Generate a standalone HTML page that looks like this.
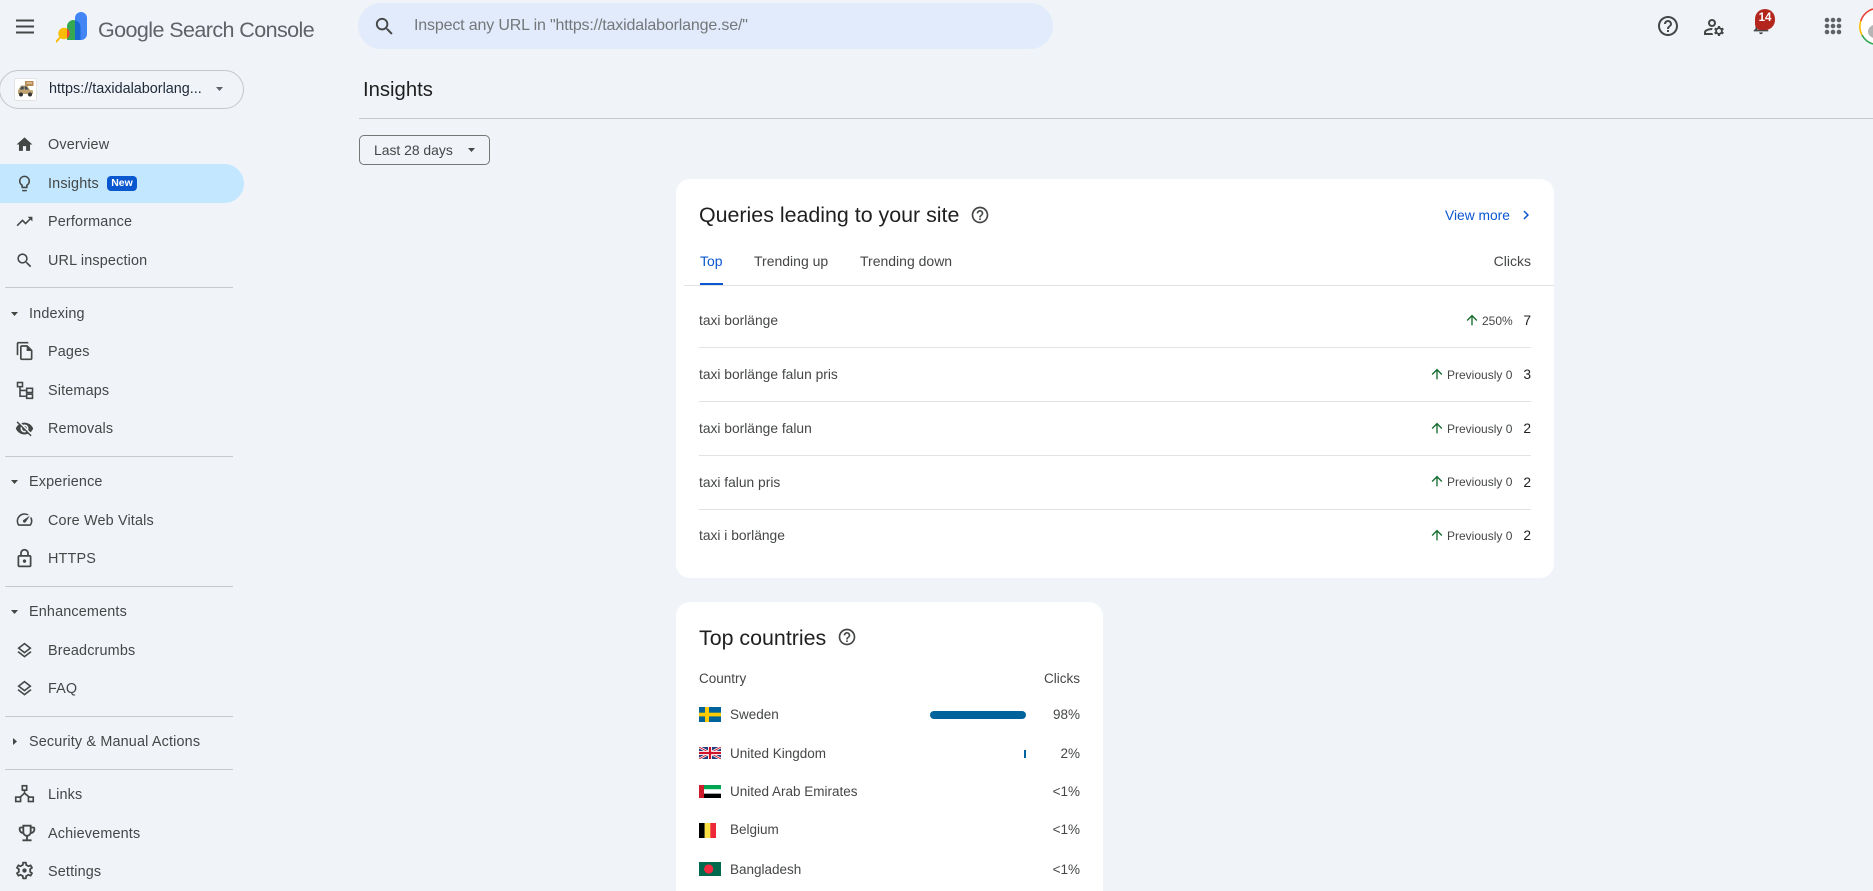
<!DOCTYPE html>
<html><head><meta charset="utf-8"><title>Insights</title>
<style>
html,body{margin:0;padding:0;width:1873px;height:891px;overflow:hidden;background:#f0f4f9;font-family:"Liberation Sans",Arial,sans-serif;color:#444746}
#w{position:absolute;left:0;top:0;width:1873px;height:891px;overflow:hidden;background:#f0f4f9;filter:blur(.3px)}
.t{position:absolute;white-space:nowrap;line-height:20px;height:20px}
.n{left:48px;font-size:14.4px;letter-spacing:.16px;color:#444746;margin-top:1px}
.h{left:29px;font-size:14.4px;letter-spacing:.16px;color:#444746;margin-top:1px}
.q{left:699px;font-size:13.8px;color:#444746;margin-top:1px}
.v{right:342px;font-size:13.8px;color:#1f1f1f;margin-top:1px}
.p{left:1447px;font-size:12px;color:#444746;margin-top:1px}
.c{left:730px;font-size:13.5px;color:#444746}
.r{right:793px;font-size:13.5px;color:#444746}
.d{position:absolute;height:1px;background:#c7c9cc}
.l{position:absolute;height:1px;background:#e0e2e5}
svg{position:absolute;display:block}
.i{width:19px;height:19px;left:15px;fill:#444746}
.a{width:16px;height:16px;fill:#146c2e}
.box{position:absolute;background:#fff;border-radius:14px}
</style></head><body><div id="w">

<!-- top bar -->
<svg style="left:13px;top:14px;width:24px;height:24px" viewBox="0 0 24 24" fill="#444746"><path d="M3 5.500h18v2H3zM3 11.500h18v2H3zM3 17.500h18v2H3z"/></svg>
<svg style="left:56px;top:11px;width:32px;height:32px" viewBox="56 11 32 32">
<rect x="75" y="12" width="12" height="28" rx="6" fill="#4285f4"/><path d="M75 40V20.500c4 .5 5.500 4 5.500 7V40z" fill="#1967d2"/>
<path d="M67 40V26.500a6.500 6.500 0 0 1 8-6.300V40z" fill="#34a853"/><circle cx="64" cy="33.500" r="5.700" fill="#fbbc04"/><path d="M67 28.650A5.700 5.700 0 0 1 67 38.350z" fill="#ea4335"/><path d="M60 37.500l-3.500 4" stroke="#fbbc04" stroke-width="2" stroke-linecap="round"/></svg>
<div class="t" style="left:98px;top:19px;font-size:21.500px;letter-spacing:-.58px;color:#5f6368;line-height:22px;height:22px">Google Search Console</div>

<div style="position:absolute;left:358px;top:3px;width:695px;height:46px;border-radius:23px;background:#e1ebfb"></div>
<svg style="left:373px;top:15px;width:23px;height:23px;fill:#444746" viewBox="0 0 24 24"><path d="M15.500 14h-.79l-.28-.27C15.410 12.590 16 11.110 16 9.500 16 5.910 13.090 3 9.500 3S3 5.910 3 9.500 5.910 16 9.500 16c1.610 0 3.090-.59 4.230-1.570l.27.28v.79l5 4.990L20.490 19l-4.990-5zm-6 0C7.010 14 5 11.990 5 9.500S7.010 5 9.500 5 14 7.010 14 9.500 11.990 14 9.500 14z"/></svg>
<div class="t" style="left:414px;top:16px;font-size:16px;letter-spacing:-.16px;color:#74777a">Inspect any URL in "https://taxidalaborlange.se/"</div>

<svg style="left:1656px;top:14px;width:24px;height:24px;fill:#444746" viewBox="0 0 24 24"><path d="M11 18h2v-2h-2v2zm1-16C6.480 2 2 6.480 2 12s4.480 10 10 10 10-4.480 10-10S17.520 2 12 2zm0 18c-4.410 0-8-3.590-8-8s3.590-8 8-8 8 3.590 8 8-3.590 8-8 8zm0-14c-2.210 0-4 1.790-4 4h2c0-1.100.9-2 2-2s2 .9 2 2c0 2-3 1.750-3 5h2c0-2.250 3-2.500 3-5 0-2.210-1.790-4-4-4z"/></svg>
<svg style="left:1702px;top:15px;width:24px;height:24px;fill:#444746" viewBox="0 0 24 24"><path d="M10 4C7.790 4 6 5.790 6 8s1.790 4 4 4 4-1.790 4-4-1.790-4-4-4zm0 6c-1.100 0-2-.9-2-2s.9-2 2-2 2 .9 2 2-.9 2-2 2z"/><path d="M4 18v-.65c0-.34.16-.66.41-.81C6.100 15.530 8.030 15 10 15c.03 0 .05 0 .08.01.1-.7.3-1.370.59-1.980-.22-.02-.44-.03-.67-.03-2.420 0-4.680.67-6.610 1.820C2.510 15.340 2 16.320 2 17.350V20h9.260c-.42-.6-.75-1.280-.97-2H4z"/><path d="M20.750 16c0-.22-.03-.42-.06-.63l1.140-1.010-1-1.730-1.450.49c-.32-.27-.68-.48-1.080-.63L18 11h-2l-.3 1.490c-.4.15-.76.36-1.080.63l-1.450-.49-1 1.730 1.140 1.010c-.03.21-.06.41-.06.63s.03.42.06.63l-1.140 1.010 1 1.730 1.450-.49c.32.27.68.48 1.080.63L16 21h2l.3-1.490c.4-.15.76-.36 1.080-.63l1.450.49 1-1.730-1.140-1.010c.03-.21.06-.41.06-.63zM17 18c-1.100 0-2-.9-2-2s.9-2 2-2 2 .9 2 2-.9 2-2 2z"/></svg>
<svg style="left:1750px;top:14px;width:22px;height:22px;fill:#444746" viewBox="0 0 24 24"><path d="M12 22c1.100 0 2-.9 2-2h-4c0 1.100.9 2 2 2zm6-6v-5c0-3.070-1.640-5.640-4.500-6.320V4c0-.83-.67-1.500-1.500-1.500s-1.500.67-1.500 1.500v.68C7.630 5.360 6 7.920 6 11v5l-2 2v1h16v-1l-2-2zm-2 1H8v-6c0-2.480 1.510-4.500 4-4.500s4 2.020 4 4.500v6z"/></svg>
<div style="position:absolute;left:1755px;top:9px;width:20px;height:21px;border-radius:10px 10px 10px 6px;background:#b3261e;color:#fff;font-size:11.500px;font-weight:bold;line-height:19px;text-align:center">14</div>
<svg style="left:1824px;top:17px;width:18px;height:18px;fill:#5f6368" viewBox="0 0 18 18"><circle cx="3" cy="3" r="2.300"/><circle cx="9" cy="3" r="2.300"/><circle cx="15" cy="3" r="2.300"/><circle cx="3" cy="9" r="2.300"/><circle cx="9" cy="9" r="2.300"/><circle cx="15" cy="9" r="2.300"/><circle cx="3" cy="15" r="2.300"/><circle cx="9" cy="15" r="2.300"/><circle cx="15" cy="15" r="2.300"/></svg>
<svg style="left:1858px;top:7px;width:15px;height:39px" viewBox="0 0 15 39"><circle cx="20" cy="19.500" r="18.200" fill="#fff" stroke="none"/><path d="M2.800 14A18.200 18.200 0 0 1 15 2" fill="none" stroke="#ea4335" stroke-width="1.600"/><path d="M2.800 14A18.200 18.200 0 0 0 4 28" fill="none" stroke="#fbbc04" stroke-width="1.600"/><path d="M4 28A18.200 18.200 0 0 0 15 37" fill="none" stroke="#34a853" stroke-width="1.600"/><ellipse cx="20" cy="24.500" rx="10" ry="7.500" fill="#b5b5b5"/></svg>

<!-- property selector -->
<div style="position:absolute;left:-1px;top:70px;width:243px;height:37px;border:1px solid #c4c7c9;border-radius:20px"></div>
<div style="position:absolute;left:14px;top:78px;width:21px;height:21px;border:1px solid #e3e3e3;background:#fff;border-radius:2px"></div>
<svg style="left:17px;top:81px;width:17px;height:17px" viewBox="0 0 17 17"><rect x="8" y="0" width="8.500" height="5" fill="#b58a55"/><rect x="9.500" y="1.500" width="5.500" height="1" fill="#f1e2c4"/><path d="M1 13V9.500l3-5h6l3 4.500 3 .5V13z" fill="#bfa272"/><path d="M4.500 5.500h2.200v3H2.800zM7.500 5.500h2l2 3h-3.500z" fill="#3c4a5a"/><circle cx="4" cy="13.500" r="2" fill="#333"/><circle cx="13" cy="13.500" r="2" fill="#333"/></svg>
<div class="t" style="left:49px;top:79px;font-size:14.400px;color:#1f2937">https://taxidalaborlang...</div>
<svg style="left:216px;top:87px;width:7px;height:4px;fill:#5f6368" viewBox="0 0 7 4"><path d="M0 0h7L3.500 4z"/></svg>

<!-- nav -->
<svg class="i" style="top:135px" viewBox="0 0 24 24"><path d="M10 20v-6h4v6h5v-8h3L12 3 2 12h3v8z"/></svg>
<div class="t n" style="top:134px">Overview</div>
<div style="position:absolute;left:-20px;top:164px;width:264px;height:39px;border-radius:0 20px 20px 0;background:#c2e7ff"></div>
<svg class="i" style="top:174px" viewBox="0 0 24 24"><path d="M9 21c0 .55.45 1 1 1h4c.55 0 1-.45 1-1v-1H9v1zm3-19C8.140 2 5 5.140 5 9c0 2.380 1.190 4.470 3 5.740V17c0 .55.45 1 1 1h6c.55 0 1-.45 1-1v-2.260c1.810-1.270 3-3.360 3-5.740 0-3.860-3.140-7-7-7zm2.850 11.100l-.85.6V16h-4v-2.300l-.85-.6C7.800 12.160 7 10.630 7 9c0-2.760 2.240-5 5-5s5 2.240 5 5c0 1.630-.8 3.160-2.150 4.100z"/></svg>
<div class="t n" style="top:173px">Insights</div>
<div style="position:absolute;left:107px;top:176px;width:30px;height:15px;border-radius:4px;background:#0b57d0;color:#fff;font-size:10.500px;font-weight:bold;line-height:15px;text-align:center">New</div>
<svg class="i" style="top:212px" viewBox="0 0 24 24"><path d="M16 6l2.290 2.290-4.880 4.880-4-4L2 16.590 3.410 18l6-6 4 4 6.300-6.290L22 12V6z"/></svg>
<div class="t n" style="top:211px">Performance</div>
<svg class="i" style="top:251px" viewBox="0 0 24 24"><path d="M15.500 14h-.79l-.28-.27C15.410 12.590 16 11.110 16 9.500 16 5.910 13.090 3 9.500 3S3 5.910 3 9.500 5.910 16 9.500 16c1.610 0 3.090-.59 4.230-1.570l.27.28v.79l5 4.990L20.490 19l-4.990-5zm-6 0C7.010 14 5 11.990 5 9.500S7.010 5 9.500 5 14 7.010 14 9.500 11.990 14 9.500 14z"/></svg>
<div class="t n" style="top:250px">URL inspection</div>
<div class="d" style="left:5px;top:287px;width:228px"></div>

<svg style="left:11px;top:312px;width:7px;height:4px;fill:#444746" viewBox="0 0 7 4"><path d="M0 0h7L3.500 4z"/></svg>
<div class="t h" style="top:303px">Indexing</div>
<svg class="i" style="top:341px;width:20px;height:20px" viewBox="0 0 24 24"><path d="M16 1H4c-1.100 0-2 .9-2 2v14h2V3h12V1zm-1 4H8c-1.100 0-1.990.9-1.990 2L6 21c0 1.100.89 2 1.990 2H19c1.100 0 2-.9 2-2V11l-6-6zM8 21V7h6v5h5v9H8z"/></svg>
<div class="t n" style="top:341px">Pages</div>
<svg class="i" style="top:380px;width:20px;height:20px;fill:none;stroke:#444746;stroke-width:1.900" viewBox="0 0 24 24"><rect x="3" y="3" width="6" height="5"/><rect x="14" y="10" width="7" height="5"/><rect x="14" y="17" width="7" height="5"/><path d="M6 8v11.500h8M6 12.500h8"/></svg>
<div class="t n" style="top:380px">Sitemaps</div>
<svg class="i" style="top:419px" viewBox="0 0 24 24"><path d="M12 7c2.760 0 5 2.240 5 5 0 .65-.13 1.260-.36 1.830l2.920 2.920c1.510-1.260 2.700-2.890 3.430-4.750-1.730-4.390-6-7.500-11-7.500-1.400 0-2.740.25-3.980.7l2.160 2.160C10.740 7.130 11.350 7 12 7zM2 4.270l2.280 2.280.46.46C3.080 8.300 1.780 10.020 1 12c1.730 4.390 6 7.500 11 7.500 1.550 0 3.030-.3 4.380-.84l.42.42L19.730 22 21 20.730 3.270 3 2 4.270zM7.530 9.800l1.550 1.550c-.05.21-.08.43-.08.65 0 1.660 1.340 3 3 3 .22 0 .44-.03.65-.08l1.550 1.550c-.67.33-1.410.53-2.200.53-2.760 0-5-2.240-5-5 0-.79.2-1.530.53-2.200zm4.310-.78l3.150 3.150.02-.16c0-1.660-1.340-3-3-3l-.17.01z"/></svg>
<div class="t n" style="top:418px">Removals</div>
<div class="d" style="left:5px;top:456px;width:228px"></div>

<svg style="left:11px;top:480px;width:7px;height:4px;fill:#444746" viewBox="0 0 7 4"><path d="M0 0h7L3.500 4z"/></svg>
<div class="t h" style="top:471px">Experience</div>
<svg class="i" style="top:510px" viewBox="0 0 24 24"><path d="M20.380 8.570l-1.230 1.850a8 8 0 0 1-.22 7.580H5.070A8 8 0 0 1 15.580 6.850l1.850-1.230A10 10 0 0 0 3.350 19a2 2 0 0 0 1.720 1h13.850a2 2 0 0 0 1.740-1 10 10 0 0 0-.27-10.440zm-9.790 6.840a2 2 0 0 0 2.830 0l5.660-8.490-8.490 5.660a2 2 0 0 0 0 2.830z"/></svg>
<div class="t n" style="top:510px">Core Web Vitals</div>
<svg class="i" style="top:548px;left:14px;width:21px;height:21px" viewBox="0 0 24 24"><path d="M18 8h-1V6c0-2.760-2.240-5-5-5S7 3.240 7 6v2H6c-1.100 0-2 .9-2 2v10c0 1.100.9 2 2 2h12c1.100 0 2-.9 2-2V10c0-1.100-.9-2-2-2zM9 6c0-1.660 1.340-3 3-3s3 1.340 3 3v2H9V6zm9 14H6V10h12v10zm-6-3c1.100 0 2-.9 2-2s-.9-2-2-2-2 .9-2 2 .9 2 2 2z"/></svg>
<div class="t n" style="top:548px">HTTPS</div>
<div class="d" style="left:5px;top:586px;width:228px"></div>

<svg style="left:11px;top:610px;width:7px;height:4px;fill:#444746" viewBox="0 0 7 4"><path d="M0 0h7L3.500 4z"/></svg>
<div class="t h" style="top:601px">Enhancements</div>
<svg class="i" style="top:641px" viewBox="0 0 24 24"><path d="M11.990 18.540l-7.370-5.730L3 14.070l9 7 9-7-1.630-1.270-7.380 5.740zM12 16l7.360-5.730L21 9l-9-7-9 7 1.630 1.270L12 16zm0-11.470L17.740 9 12 13.470 6.260 9 12 4.530z"/></svg>
<div class="t n" style="top:640px">Breadcrumbs</div>
<svg class="i" style="top:679px" viewBox="0 0 24 24"><path d="M11.990 18.540l-7.370-5.730L3 14.070l9 7 9-7-1.630-1.270-7.380 5.740zM12 16l7.360-5.730L21 9l-9-7-9 7 1.630 1.270L12 16zm0-11.470L17.740 9 12 13.470 6.260 9 12 4.530z"/></svg>
<div class="t n" style="top:678px">FAQ</div>
<div class="d" style="left:5px;top:716px;width:228px"></div>

<svg style="left:13px;top:738px;width:4px;height:7px;fill:#444746" viewBox="0 0 4 7"><path d="M0 0l4 3.500L0 7z"/></svg>
<div class="t h" style="top:731px">Security &amp; Manual Actions</div>
<div class="d" style="left:5px;top:769px;width:228px"></div>

<svg class="i" style="top:784px;left:14px;width:21px;height:21px;fill:none;stroke:#444746;stroke-width:1.900" viewBox="0 0 24 24"><rect x="9.500" y="2" width="5" height="5"/><rect x="2" y="15" width="5.500" height="5"/><rect x="16.500" y="15" width="5.500" height="5"/><path d="M12 7v3.500M12 10.500L7 15M12 10.500l5.500 4.500"/></svg>
<div class="t n" style="top:784px">Links</div>
<svg class="i" style="top:822px;left:15.500px;width:22px;height:22px" viewBox="0 0 24 24"><path d="M19 5h-2V3H7v2H5c-1.100 0-2 .9-2 2v1c0 2.550 1.920 4.630 4.390 4.940.63 1.500 1.980 2.630 3.610 2.960V19H7v2h10v-2h-4v-3.100c1.630-.33 2.980-1.460 3.610-2.960C19.080 12.630 21 10.550 21 8V7c0-1.100-.9-2-2-2zM5 8V7h2v3.820C5.840 10.400 5 9.300 5 8zm7 6c-1.650 0-3-1.350-3-3V5h6v6c0 1.650-1.350 3-3 3zm7-6c0 1.300-.84 2.400-2 2.820V7h2v1z"/></svg>
<div class="t n" style="top:823px">Achievements</div>
<svg class="i" style="top:860px;left:14px;width:21px;height:21px" viewBox="0 0 24 24"><path d="M19.430 12.980c.04-.32.07-.64.07-.98 0-.34-.03-.66-.07-.98l2.110-1.650c.19-.15.24-.42.12-.64l-2-3.460c-.09-.16-.26-.25-.44-.25-.06 0-.12.01-.17.03l-2.490 1c-.52-.4-1.080-.73-1.690-.98l-.38-2.650C14.460 2.180 14.250 2 14 2h-4c-.25 0-.46.18-.49.42l-.38 2.650c-.61.25-1.170.59-1.690.98l-2.490-1c-.06-.02-.12-.03-.18-.03-.17 0-.34.09-.43.25l-2 3.460c-.13.22-.07.49.12.64l2.110 1.650c-.04.32-.07.65-.07.98 0 .33.03.66.07.98l-2.110 1.650c-.19.15-.24.42-.12.64l2 3.460c.09.16.26.25.44.25.06 0 .12-.01.17-.03l2.490-1c.52.4 1.080.73 1.690.98l.38 2.650c.03.24.24.42.49.42h4c.25 0 .46-.18.49-.42l.38-2.650c.61-.25 1.170-.59 1.690-.98l2.490 1c.06.02.12.03.18.03.17 0 .34-.09.43-.25l2-3.460c.12-.22.07-.49-.12-.64l-2.110-1.650zm-1.980-1.710c.04.31.05.52.05.73 0 .21-.02.43-.05.73l-.14 1.130.89.7 1.080.84-.7 1.210-1.270-.51-1.040-.42-.9.68c-.43.32-.84.56-1.250.73l-1.060.43-.16 1.130-.2 1.350h-1.400l-.19-1.350-.16-1.130-1.060-.43c-.43-.18-.83-.41-1.230-.71l-.91-.7-1.060.43-1.270.51-.7-1.210 1.080-.84.89-.7-.14-1.130c-.03-.31-.05-.54-.05-.74s.02-.43.05-.73l.14-1.130-.89-.7-1.080-.84.7-1.210 1.270.51 1.040.42.9-.68c.43-.32.84-.56 1.250-.73l1.060-.43.16-1.130.2-1.350h1.390l.19 1.350.16 1.130 1.060.43c.43.18.83.41 1.230.71l.91.7 1.060-.43 1.270-.51.7 1.210-1.070.85-.89.7.14 1.130zM12 9.500a2.500 2.500 0 1 0 0 5 2.500 2.500 0 0 0 0-5z"/></svg>
<div class="t n" style="top:861px">Settings</div>

<!-- page header -->
<div class="t" style="left:363px;top:78px;font-size:20.300px;line-height:24px;height:24px;color:#1f1f1f">Insights</div>
<div class="d" style="left:359px;top:118px;width:1514px"></div>
<div style="position:absolute;left:359px;top:135px;width:129px;height:28px;border:1px solid #747775;border-radius:5px"></div>
<div class="t" style="left:374px;top:140px;font-size:13.900px;color:#444746">Last 28 days</div>
<svg style="left:468px;top:148px;width:7px;height:4px;fill:#444746" viewBox="0 0 7 4"><path d="M0 0h7L3.500 4z"/></svg>

<!-- queries card -->
<div class="box" style="left:676px;top:179px;width:878px;height:399px"></div>
<div class="t" style="left:699px;top:202px;font-size:21.400px;line-height:26px;height:26px;color:#1f1f1f">Queries leading to your site</div>
<svg style="left:970px;top:205px;width:20px;height:20px;fill:#444746" viewBox="0 0 24 24"><path d="M11 18h2v-2h-2v2zm1-16C6.480 2 2 6.480 2 12s4.480 10 10 10 10-4.480 10-10S17.520 2 12 2zm0 18c-4.410 0-8-3.590-8-8s3.590-8 8-8 8 3.590 8 8-3.590 8-8 8zm0-14c-2.210 0-4 1.790-4 4h2c0-1.100.9-2 2-2s2 .9 2 2c0 2-3 1.750-3 5h2c0-2.250 3-2.500 3-5 0-2.210-1.790-4-4-4z"/></svg>
<div class="t" style="left:1445px;top:206px;font-size:13.800px;color:#0b57d0">View more</div>
<svg style="left:1517px;top:206px;width:18px;height:18px;fill:#0b57d0" viewBox="0 0 24 24"><path d="M10 6L8.590 7.410 13.170 12l-4.580 4.590L10 18l6-6z"/></svg>
<div class="t" style="left:700px;top:251px;font-size:14px;color:#0b57d0">Top</div>
<div style="position:absolute;left:700px;top:283px;width:23px;height:2px;background:#0b57d0"></div>
<div class="t" style="left:754px;top:251px;font-size:14px;color:#444746">Trending up</div>
<div class="t" style="left:860px;top:251px;font-size:14px;color:#444746">Trending down</div>
<div class="t" style="right:342px;top:251px;font-size:14px;color:#444746">Clicks</div>
<div class="l" style="left:684px;top:285px;width:870px"></div>

<div class="t q" style="top:310px">taxi borlänge</div>
<svg class="a" style="left:1464px;top:312px" viewBox="0 0 24 24"><path d="M4 12l1.410 1.410L11 7.830V20h2V7.830l5.580 5.590L20 12l-8-8-8 8z"/></svg>
<div class="t p" style="left:1482px;top:310px">250%</div>
<div class="t v" style="top:310px">7</div>
<div class="l" style="left:699px;top:347px;width:832px"></div>

<div class="t q" style="top:364px">taxi borlänge falun pris</div>
<svg class="a" style="left:1429px;top:366px" viewBox="0 0 24 24"><path d="M4 12l1.410 1.410L11 7.830V20h2V7.830l5.580 5.590L20 12l-8-8-8 8z"/></svg>
<div class="t p" style="top:364px">Previously 0</div>
<div class="t v" style="top:364px">3</div>
<div class="l" style="left:699px;top:401px;width:832px"></div>

<div class="t q" style="top:418px">taxi borlänge falun</div>
<svg class="a" style="left:1429px;top:420px" viewBox="0 0 24 24"><path d="M4 12l1.410 1.410L11 7.830V20h2V7.830l5.580 5.590L20 12l-8-8-8 8z"/></svg>
<div class="t p" style="top:418px">Previously 0</div>
<div class="t v" style="top:418px">2</div>
<div class="l" style="left:699px;top:455px;width:832px"></div>

<div class="t q" style="top:472px">taxi falun pris</div>
<svg class="a" style="left:1429px;top:473px" viewBox="0 0 24 24"><path d="M4 12l1.410 1.410L11 7.830V20h2V7.830l5.580 5.590L20 12l-8-8-8 8z"/></svg>
<div class="t p" style="top:471px">Previously 0</div>
<div class="t v" style="top:472px">2</div>
<div class="l" style="left:699px;top:509px;width:832px"></div>

<div class="t q" style="top:525px">taxi i borlänge</div>
<svg class="a" style="left:1429px;top:527px" viewBox="0 0 24 24"><path d="M4 12l1.410 1.410L11 7.830V20h2V7.830l5.580 5.590L20 12l-8-8-8 8z"/></svg>
<div class="t p" style="top:525px">Previously 0</div>
<div class="t v" style="top:525px">2</div>

<!-- countries card -->
<div class="box" style="left:676px;top:602px;width:427px;height:289px;border-radius:14px 14px 0 0"></div>
<div class="t" style="left:699px;top:625px;font-size:21.400px;line-height:26px;height:26px;color:#1f1f1f">Top countries</div>
<svg style="left:837px;top:627px;width:20px;height:20px;fill:#444746" viewBox="0 0 24 24"><path d="M11 18h2v-2h-2v2zm1-16C6.480 2 2 6.480 2 12s4.480 10 10 10 10-4.480 10-10S17.520 2 12 2zm0 18c-4.410 0-8-3.590-8-8s3.590-8 8-8 8 3.590 8 8-3.590 8-8 8zm0-14c-2.210 0-4 1.790-4 4h2c0-1.100.9-2 2-2s2 .9 2 2c0 2-3 1.750-3 5h2c0-2.250 3-2.500 3-5 0-2.210-1.790-4-4-4z"/></svg>
<div class="t c" style="left:699px;top:669px">Country</div>
<div class="t r" style="top:669px">Clicks</div>

<svg style="left:699px;top:707px;width:22px;height:15px" viewBox="0 0 22 15"><rect width="22" height="15" fill="#00639b"/><rect x="6" width="4" height="15" fill="#fecc00"/><rect y="5.700" width="22" height="3.700" fill="#fecc00"/></svg>
<div class="t c" style="top:705px">Sweden</div>
<div style="position:absolute;left:930px;top:711px;width:96px;height:8px;border-radius:4px;background:#00639b"></div>
<div class="t r" style="top:705px">98%</div>

<svg style="left:699px;top:747px;width:22px;height:12px" viewBox="0 0 22 12"><rect width="22" height="12" fill="#26407f"/><path d="M0 0l22 12M22 0L0 12" stroke="#fff" stroke-width="2.500"/><path d="M0 0l22 12M22 0L0 12" stroke="#cf142b" stroke-width=".9"/><path d="M11 0v12M0 6h22" stroke="#fff" stroke-width="4"/><path d="M11 0v12M0 6h22" stroke="#cf142b" stroke-width="2.200"/></svg>
<div class="t c" style="top:744px">United Kingdom</div>
<div style="position:absolute;left:1024px;top:750px;width:2px;height:8px;background:#00639b"></div>
<div class="t r" style="top:744px">2%</div>

<svg style="left:699px;top:785px;width:22px;height:13px" viewBox="0 0 22 13"><rect width="22" height="4.330" fill="#00a651"/><rect y="4.330" width="22" height="4.340" fill="#fff"/><rect y="8.670" width="22" height="4.330" fill="#000"/><rect width="5" height="13" fill="#d01c2a"/></svg>
<div class="t c" style="top:782px">United Arab Emirates</div>
<div class="t r" style="top:782px">&lt;1%</div>

<svg style="left:699px;top:823px;width:17px;height:15px" viewBox="0 0 17 15"><rect width="5.700" height="15" fill="#000"/><rect x="5.700" width="5.700" height="15" fill="#fae042"/><rect x="11.300" width="5.700" height="15" fill="#ed2939"/></svg>
<div class="t c" style="top:820px">Belgium</div>
<div class="t r" style="top:820px">&lt;1%</div>

<svg style="left:699px;top:862px;width:22px;height:14px" viewBox="0 0 22 14"><rect width="22" height="14" fill="#006a4e"/><circle cx="9.700" cy="7" r="4.600" fill="#f42a41"/></svg>
<div class="t c" style="top:860px">Bangladesh</div>
<div class="t r" style="top:860px">&lt;1%</div>

</div></body></html>
